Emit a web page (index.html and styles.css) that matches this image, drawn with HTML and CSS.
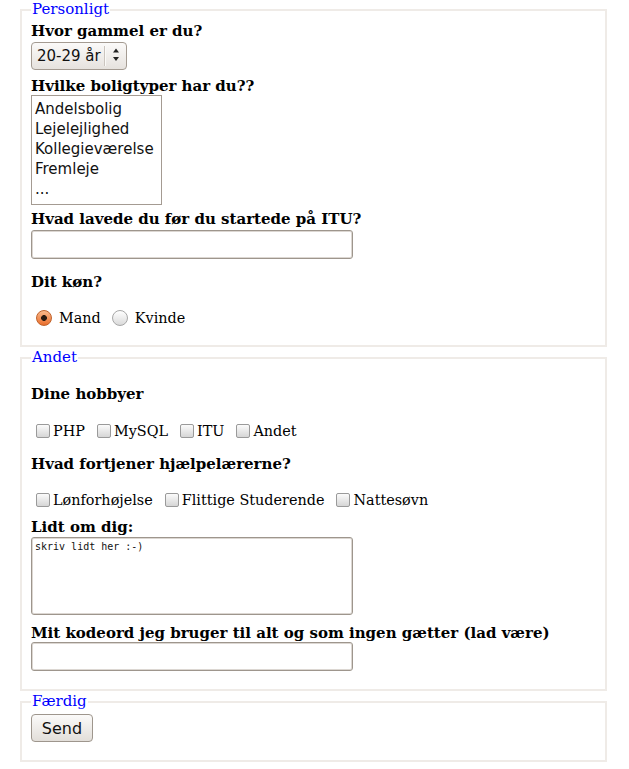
FILE: index.html
```html
<!DOCTYPE html>
<html lang="da">
<head>
    <meta charset="UTF-8">
    <title>Spørgeskema</title>
    <link rel="stylesheet" href="styles.css">
</head>
<body>
    <form id="survey">
        <fieldset class="group">
            <legend>Personligt</legend>
            <label class="q first" for="alder">Hvor gammel er du?</label>
            <div class="dropdown-wrap">
                <select id="alder" class="dropdown">
                    <option>20-29 år</option>
                    <option>30-39 år</option>
                </select>
                <svg class="dropdown-arrows" width="23" height="28" viewBox="0 0 23 28">
                    <line x1="0.5" y1="4" x2="0.5" y2="24" stroke="#cbc5bf"/>
                    <line x1="1.5" y1="4" x2="1.5" y2="24" stroke="#fbfaf8"/>
                    <polygon points="9,10.5 15,10.5 12,6.5" fill="#222"/>
                    <polygon points="9,15 15,15 12,19" fill="#222"/>
                </svg>
            </div>

            <label class="q bolig" for="bolig">Hvilke boligtyper har du??</label>
            <select id="bolig" class="listbox" multiple size="5">
                <option>Andelsbolig</option>
                <option>Lejelejlighed</option>
                <option>Kollegieværelse</option>
                <option>Fremleje</option>
                <option>...</option>
            </select>

            <label class="q before" for="foer">Hvad lavede du før du startede på ITU?</label>
            <input type="text" id="foer" class="field">

            <p class="q gender">Dit køn?</p>
            <div class="choices radios">
                <label class="choice"><input type="radio" name="koen" checked>Mand</label>
                <label class="choice"><input type="radio" name="koen">Kvinde</label>
            </div>
        </fieldset>

        <fieldset class="group">
            <legend>Andet</legend>
            <p class="q hobby">Dine hobbyer</p>
            <div class="choices boxes">
                <label class="choice"><input type="checkbox">PHP</label>
                <label class="choice"><input type="checkbox">MySQL</label>
                <label class="choice"><input type="checkbox">ITU</label>
                <label class="choice"><input type="checkbox">Andet</label>
            </div>

            <p class="q helpers">Hvad fortjener hjælpelærerne?</p>
            <div class="choices boxes boxes2">
                <label class="choice"><input type="checkbox">Lønforhøjelse</label>
                <label class="choice"><input type="checkbox">Flittige Studerende</label>
                <label class="choice"><input type="checkbox">Nattesøvn</label>
            </div>

            <label class="q about" for="om">Lidt om dig:</label>
            <textarea id="om" class="notes">skriv lidt her :-)</textarea>

            <label class="q secret" for="kode">Mit kodeord jeg bruger til alt og som ingen gætter (lad være)</label>
            <input type="password" id="kode" class="field">
        </fieldset>

        <fieldset class="group">
            <legend>Færdig</legend>
            <button type="submit" class="send">Send</button>
        </fieldset>
    </form>
</body>
</html>
```

FILE: styles.css
```css
body {
    margin: 0;
    font-family: "DejaVu Serif", serif;
    font-size: 15px;
    background: #fff;
    color: #000;
}

form {
    margin: 0;
}

.group {
    margin: 0 22px 1px 20px;
    padding: 3px 9px 17px 9px;
    border: 2px solid #efebe7;
    min-width: 0;
}

.group + .group {
    padding-top: 0;
    padding-bottom: 18px;
}

legend {
    padding: 0 1px;
    margin-left: 0;
    color: #0000ff;
    font-size: 15px;
    line-height: 19px;
}

.q {
    display: block;
    margin: 0;
    font-weight: bold;
    line-height: 18px;
}

.bolig { margin-top: 7px; }
.before { margin-top: 5px; }
.gender { margin-top: 14px; }
.hobby { margin-top: 18px; }
.helpers { margin-top: 14px; }
.about { margin-top: 8px; }
.secret { margin-top: 9px; }

/* drop-down */
.dropdown-wrap {
    position: relative;
    width: 96px;
    height: 28px;
    margin-top: 2px;
}

.dropdown {
    appearance: none;
    -webkit-appearance: none;
    width: 96px;
    height: 28px;
    margin: 0;
    padding: 0 0 0 5px;
    border: 1px solid #a49b92;
    border-radius: 4px;
    background: linear-gradient(#fbfaf9, #e6e2de);
    font-family: "DejaVu Sans", sans-serif;
    font-size: 15px;
    color: #111;
}

.dropdown-arrows {
    position: absolute;
    top: 0;
    right: 0;
    pointer-events: none;
}

/* list box */
.listbox {
    display: block;
    width: 131px;
    height: 110px;
    margin: 0;
    padding: 3px 0 0 0;
    border: 1px solid #a49b92;
    border-radius: 0;
    background: #fff;
    font-family: "DejaVu Sans", sans-serif;
    font-size: 15px;
    color: #111;
    overflow: hidden;
}

.listbox option {
    padding: 1px 3px 1px 3px;
    line-height: 18px;
}

/* text fields */
.field,
.notes {
    display: block;
    width: 322px;
    margin: 0;
    border: 1px solid #9e968d;
    border-radius: 3px;
    box-shadow: inset 0 0 0 1px #dcd7d2;
    background: #fff;
    box-sizing: border-box;
}

.field {
    height: 29px;
    margin-top: 2px;
    padding: 0 4px;
    font-family: "DejaVu Sans", sans-serif;
    font-size: 15px;
}

.group + .group .field {
    margin-top: 0;
}

.notes {
    height: 78px;
    margin-top: 1px;
    padding: 3px 3px;
    font-family: "DejaVu Sans Mono", monospace;
    font-size: 10px;
    line-height: 12px;
    resize: none;
    color: #111;
}

/* radios and checkboxes */
.choices {
    display: flex;
    align-items: center;
    height: 20px;
    font-size: 14.4px;
}

.radios { margin-top: 17px; }
.boxes { margin-top: 18px; }
.boxes2 { margin-top: 17px; }

.choice {
    display: inline-flex;
    align-items: center;
    margin-right: 6px;
    line-height: 20px;
}

.boxes .choice {
    margin-right: 7px;
}

.choice input {
    appearance: none;
    -webkit-appearance: none;
    margin: 0;
    flex: none;
}

input[type="radio"] {
    width: 16px;
    height: 16px;
    margin: 0 7px 0 5px;
    border: 1px solid #a7a7a7;
    border-radius: 50%;
    background: linear-gradient(#ffffff, #dadada);
}

input[type="radio"]:checked {
    border-color: #c0622b;
    background: radial-gradient(circle, #2a1a10 0 2.6px, transparent 3.2px),
                linear-gradient(#f9b98b, #ea6e2c);
}

input[type="checkbox"] {
    width: 14px;
    height: 14px;
    margin: 0 3px 0 5px;
    border: 1px solid #9a9a9a;
    border-radius: 2px;
    background: linear-gradient(#fbfbfb, #d6d6d6);
}

/* button */
.send {
    display: block;
    width: 62px;
    height: 28px;
    margin-top: 3px;
    padding: 0;
    border: 1px solid #9e968d;
    border-radius: 4px;
    background: linear-gradient(#fbfaf9, #e2ded9);
    font-family: "DejaVu Sans", sans-serif;
    font-size: 16px;
    color: #111;
}
```
